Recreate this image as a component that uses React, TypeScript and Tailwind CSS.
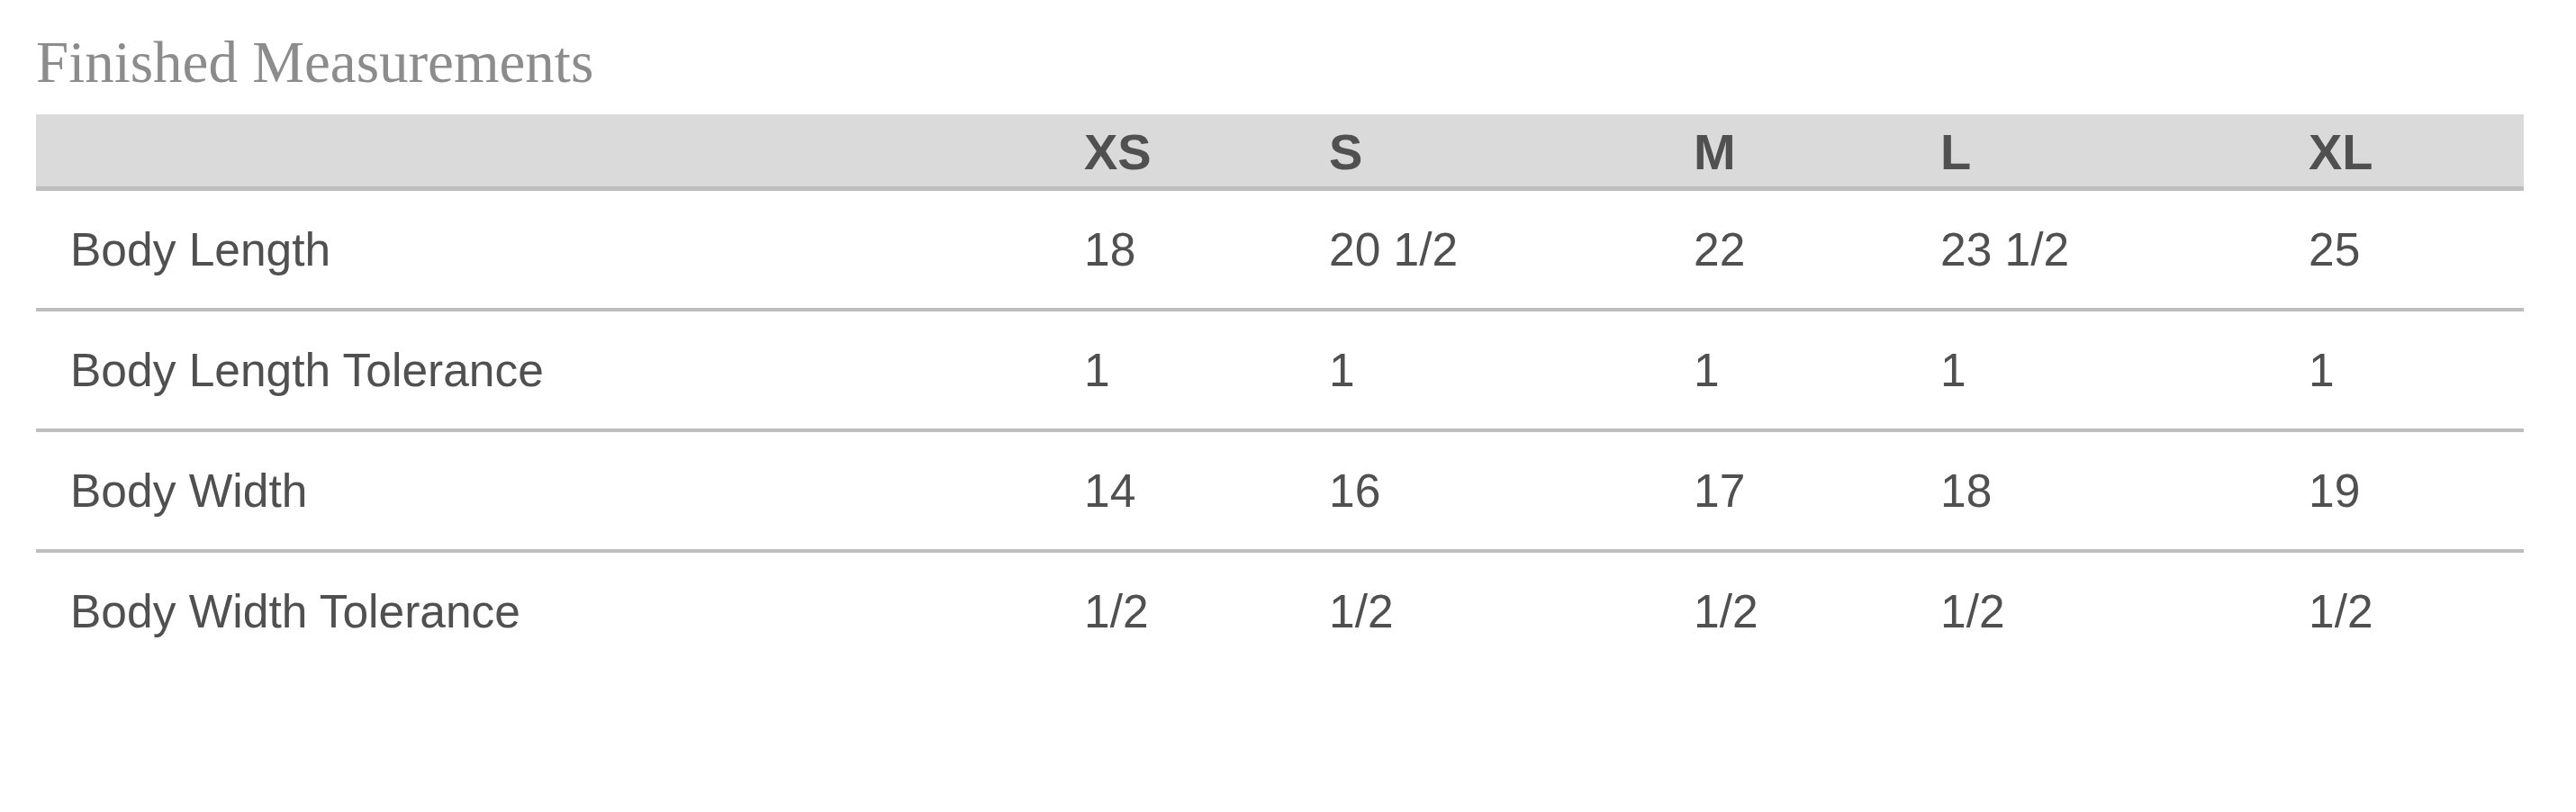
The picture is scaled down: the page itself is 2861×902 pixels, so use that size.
const SIZES = ['XS', 'S', 'M', 'L', 'XL']

interface MeasureRow {
  label: string
  values: string[]
}

const ROWS: MeasureRow[] = [
  { label: 'Body Length', values: ['18', '20 1/2', '22', '23 1/2', '25'] },
  { label: 'Body Length Tolerance', values: ['1', '1', '1', '1', '1'] },
  { label: 'Body Width', values: ['14', '16', '17', '18', '19'] },
  { label: 'Body Width Tolerance', values: ['1/2', '1/2', '1/2', '1/2', '1/2'] },
]

// column widths picked off the reference (label + 5 sizes)
const GRID = 'grid grid-cols-[1128px_272px_405px_274px_409px_275px]'

export default function App() {
  return (
    <div className="min-h-[902px] bg-white pl-[40px] pt-[32px]">
      <h1 className="mb-[20px] font-['Liberation_Serif',serif] text-[65px] font-normal leading-[75px] text-[#8c8c8c]">
        Finished Measurements
      </h1>

      <div className="w-[2763px] font-['Liberation_Sans',Arial,sans-serif] text-[#505050]">
        {/* header */}
        <div className={`${GRID} h-[85px] items-center border-b-[5px] border-[#bebebe] bg-[#dadada]`}>
          <div />
          {SIZES.map((s) => (
            <div key={s} className="pl-[36px] text-[56px] font-bold">
              {s}
            </div>
          ))}
        </div>

        {ROWS.map((r, i) => {
          const last = i === ROWS.length - 1
          return (
            <div
              key={r.label}
              className={`${GRID} items-center pt-[2px] text-[51.5px] ${
                last ? 'h-[130px]' : 'h-[134px] border-b-[4px] border-[#bebebe]'
              }`}
            >
              <div className="pl-[38px]">{r.label}</div>
              {r.values.map((v, j) => (
                <div key={j} className="pl-[36px]">
                  {v}
                </div>
              ))}
            </div>
          )
        })}
      </div>
    </div>
  )
}
